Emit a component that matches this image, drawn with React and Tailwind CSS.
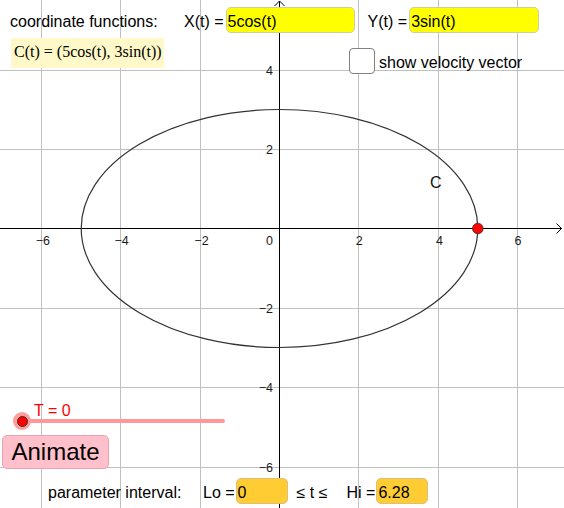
export default function App() {
  const vx = [41, 120, 200, 358, 438, 517];
  const hy = [70, 149, 308, 387, 467];
  const xLabels = [
    ["−6", 42.8],
    ["−4", 121.7],
    ["−2", 201.5],
    ["2", 359.2],
    ["4", 439.5],
    ["6", 518],
  ];
  const yLabels = [
    ["4", 75.3],
    ["2", 154],
    ["−2", 313.3],
    ["−4", 392],
    ["−6", 471.5],
  ];
  const lbl = "h-[26px] pt-[4px] leading-[22px] whitespace-pre";
  return (
    <div className="relative w-[564px] h-[508px] bg-white overflow-hidden font-['Liberation_Sans',Arial,sans-serif] text-[16px] text-black">
      <svg className="absolute inset-0" width="564" height="508" viewBox="0 0 564 508">
        {vx.map((x) => (
          <line key={"v" + x} x1={x + 0.5} y1="0" x2={x + 0.5} y2="508" stroke="#c0c0c0" strokeWidth="1" />
        ))}
        {hy.map((y) => (
          <line key={"h" + y} x1="0" y1={y + 0.5} x2="564" y2={y + 0.5} stroke="#c0c0c0" strokeWidth="1" />
        ))}
        <line x1="0" y1="228.5" x2="562" y2="228.5" stroke="#000" strokeWidth="1" />
        <polyline points="556.5,223.5 561.5,228.5 556.5,233.5" fill="none" stroke="#000" strokeWidth="1" />
        <line x1="279.5" y1="508" x2="279.5" y2="1" stroke="#000" strokeWidth="1" />
        <polyline points="274.5,6 279.5,1 284.5,6" fill="none" stroke="#000" strokeWidth="1" />
        <g fontFamily="'Liberation Sans', Arial, sans-serif" fontSize="12.5" fill="#1a1a1a">
          {xLabels.map(([t, x]) => (
            <text key={"xl" + t} x={x} y="245" textAnchor="middle">{t}</text>
          ))}
          <text x="273" y="245" textAnchor="end">0</text>
          {yLabels.map(([t, y]) => (
            <text key={"yl" + t} x="273" y={y} textAnchor="end">{t}</text>
          ))}
        </g>
        <ellipse cx="279.5" cy="228.5" rx="198.3" ry="119" fill="none" stroke="#333" strokeWidth="1.2" />
        <text x="430" y="188" fontFamily="'Liberation Sans', Arial, sans-serif" fontSize="16" fill="#111">C</text>
        <circle cx="477.8" cy="228.5" r="5.3" fill="#ff0000" stroke="#333" strokeWidth="0.8" />
      </svg>

      <div className="relative flex flex-col h-full pb-[4px]">
        {/* Row 1 */}
        <div className="flex items-start mt-[7px] h-[26px] pl-[10px]">
          <span className={lbl + " w-[174px]"}>coordinate functions:</span>
          <span className={lbl}>X(t) =</span>
          <div className="ml-[2px] w-[129px] h-[26px] pt-[3px] pl-[1px] leading-[22px] bg-[#ffff00] border border-[#cfcf9a] rounded-[5px]">5cos(t)</div>
          <span className={lbl + " ml-[13px]"}>Y(t) =</span>
          <div className="ml-[2px] w-[130px] h-[26px] pt-[3px] pl-[1px] leading-[22px] bg-[#ffff00] border border-[#cfcf9a] rounded-[5px]">3sin(t)</div>
        </div>

        {/* Row 2 */}
        <div className="flex items-start mt-[5px] pl-[11px]">
          <div className="w-[153px] h-[30px] bg-[#fff8c8] pl-[3px] leading-[28px] font-['Liberation_Serif','Times_New_Roman',serif] text-[16px] whitespace-pre">
            C(t) = (5cos(t), 3sin(t))
          </div>
          <div className="ml-[185px] mt-[10px] flex items-center">
            <div className="w-[26px] h-[26px] bg-white border border-[#808080] rounded-[4px]" />
            <span className="ml-[4px] pt-[4px] leading-[18px]">show velocity vector</span>
          </div>
        </div>

        <div className="flex-1" />

        {/* Slider */}
        <div className="relative h-[30px] w-[240px]">
          <div className="pt-[1px] pl-[34px] leading-[18px] text-[#ff0000]">T = 0</div>
          <div className="absolute left-[20px] top-[18px] w-[205px] h-[4px] rounded-full bg-[#ff9999]" />
          <div className="absolute left-[13px] top-[11px] w-[18px] h-[18px] rounded-full bg-[#ff9c9c] flex items-center justify-center">
            <div className="w-[11px] h-[11px] rounded-full bg-[#ff0000] border border-[#333]" />
          </div>
        </div>

        {/* Animate button */}
        <div className="mt-[4px] ml-[2px] w-[107px] h-[34px] bg-[#ffc0cb] border border-[#e8a3b0] rounded-[5px] flex items-center justify-center text-[24px] leading-[30px]">
          Animate
        </div>

        {/* Bottom row */}
        <div className="flex items-start mt-[9px] h-[26px] pl-[48px]">
          <span className={lbl + " w-[155px]"}>parameter interval:</span>
          <span className={lbl}>Lo =</span>
          <div className="ml-[1px] w-[52px] h-[26px] pt-[3px] pl-[1px] leading-[22px] bg-[#ffcc33] border border-[#dcc07a] rounded-[5px]">0</div>
          <span className={lbl + " ml-[9px]"}>≤ t ≤</span>
          <span className={lbl + " ml-[19px]"}>Hi =</span>
          <div className="ml-[1px] w-[52px] h-[26px] pt-[3px] pl-[1px] leading-[22px] bg-[#ffcc33] border border-[#dcc07a] rounded-[5px]">6.28</div>
        </div>
      </div>
    </div>
  );
}
